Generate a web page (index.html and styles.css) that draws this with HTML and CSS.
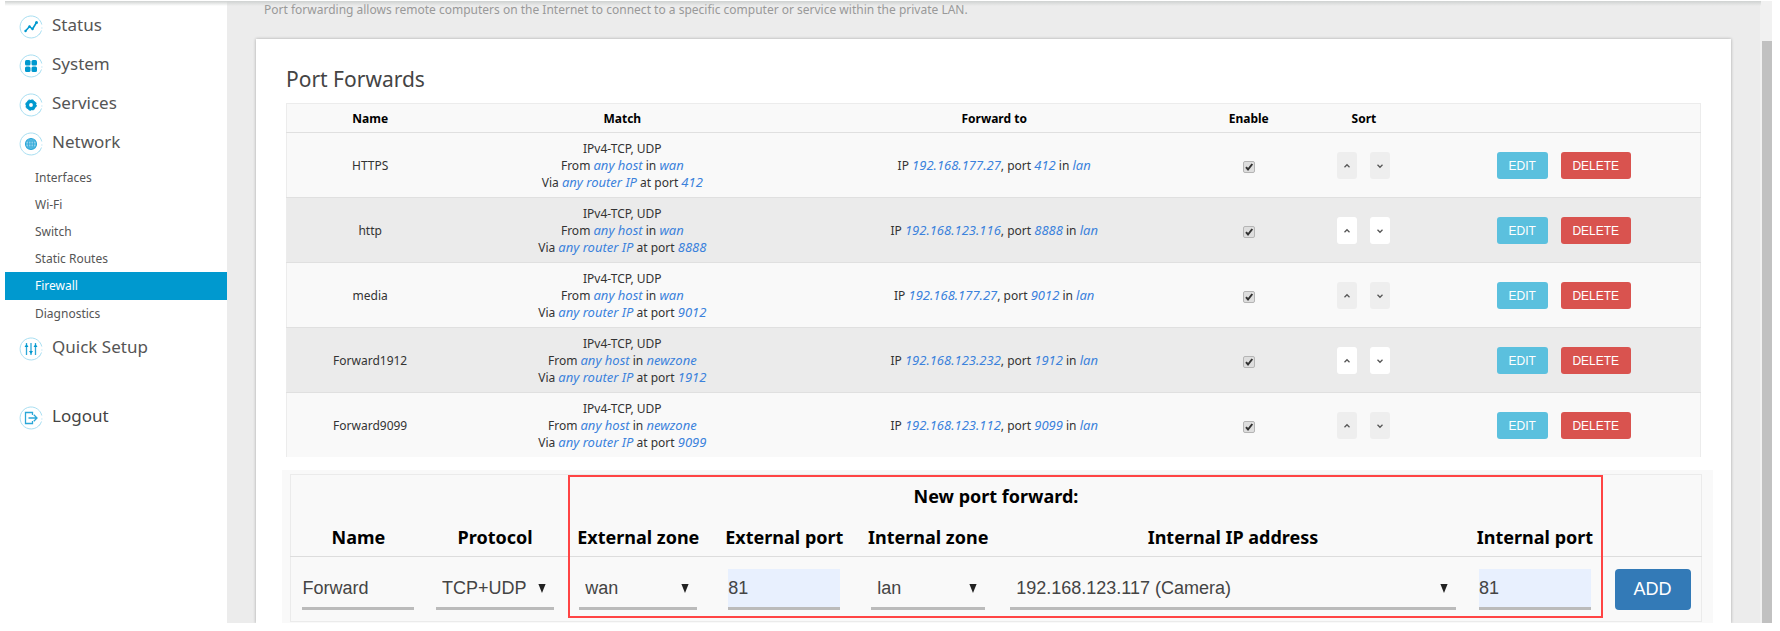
FILE: index.html
```html
<!DOCTYPE html>
<html lang="en">
<head>
  <meta charset="UTF-8">
  <title>Port Forwards</title>
  <link rel="stylesheet" href="styles.css">
</head>
<body>

<div class="page">
  <nav class="sidebar">
    <ul class="menu">
      <li>
        <a class="menu-link" href="#">
          <svg class="icon" viewBox="0 0 24 24"><path class="ring" d="M22.500 15.500A11 11 0 1 1 22.800 9.500M21 18.500l-1 1.200M22.900 12.500v1"/><path class="line" d="M6.500 16l4-4.500 3 2.500 4-6.500"/><circle class="fill" cx="6.500" cy="16" r="1.200"/><circle class="fill" cx="17.500" cy="7.500" r="1.500"/><circle class="fill" cx="10.500" cy="11.500" r="1.200"/><circle class="fill" cx="13.500" cy="14" r="1.200"/></svg>
          Status
        </a>
      </li>
      <li>
        <a class="menu-link" href="#">
          <svg class="icon" viewBox="0 0 24 24"><path class="ring" d="M22.500 15.500A11 11 0 1 1 22.800 9.500M21 18.500l-1 1.200M22.900 12.500v1"/><rect class="fill" x="6" y="6" width="5.500" height="5.500" rx="1.500"/><rect class="fill" x="12.500" y="6" width="5.500" height="5.500" rx="1.500"/><rect class="fill" x="6" y="12.500" width="5.500" height="5.500" rx="1.500"/><rect class="fill" x="12.500" y="12.500" width="5.500" height="5.500" rx="1.500"/></svg>
          System
        </a>
      </li>
      <li>
        <a class="menu-link" href="#">
          <svg class="icon" viewBox="0 0 24 24"><path class="ring" d="M22.500 15.500A11 11 0 1 1 22.800 9.500M21 18.500l-1 1.200M22.900 12.500v1"/><circle cx="12" cy="12" r="3.600" fill="none" stroke="#0099cf" stroke-width="3.400"/><circle cx="12" cy="12" r="5.300" fill="none" stroke="#0099cf" stroke-width="1" stroke-dasharray="2.200 1.960"/></svg>
          Services
        </a>
      </li>
      <li>
        <a class="menu-link" href="#">
          <svg class="icon" viewBox="0 0 24 24"><path class="ring" d="M22.500 15.500A11 11 0 1 1 22.800 9.500M21 18.500l-1 1.200M22.900 12.500v1"/><circle cx="12" cy="12" r="5.500" fill="#8fd0ec" stroke="#2ba7d8" stroke-width="1.200"/><path d="M6.500 12h11M12 6.500v11M7.500 9h9M7.500 15h9" stroke="#2ba7d8" stroke-width=".8"/><ellipse cx="12" cy="12" rx="2.600" ry="5.500" fill="none" stroke="#2ba7d8" stroke-width=".8"/></svg>
          Network
        </a>
        <ul class="submenu">
          <li><a href="#">Interfaces</a></li>
          <li><a href="#">Wi-Fi</a></li>
          <li><a href="#">Switch</a></li>
          <li><a href="#">Static Routes</a></li>
          <li><a class="active" href="#">Firewall</a></li>
          <li><a href="#">Diagnostics</a></li>
        </ul>
      </li>
      <li>
        <a class="menu-link" href="#">
          <svg class="icon" viewBox="0 0 24 24"><path class="ring" d="M22.500 15.500A11 11 0 1 1 22.800 9.500M21 18.500l-1 1.200M22.900 12.500v1"/><path class="line thin" d="M7.500 6v12M12 6v12M16.500 6v12"/><path class="fill" d="M5.500 10h4L7.500 7zM10 14h4l-2 3zM14.500 10h4l-2-3z"/></svg>
          Quick Setup
        </a>
      </li>
      <li class="logout">
        <a class="menu-link" href="#">
          <svg class="icon" viewBox="0 0 24 24"><path class="ring" d="M22.500 15.500A11 11 0 1 1 22.800 9.500M21 18.500l-1 1.200M22.900 12.500v1"/><path class="line thin" d="M13.500 9V6.500H6.500v11h7V15M9.500 12h8.500M14.800 8.800L18 12l-3.200 3.200"/></svg>
          Logout
        </a>
      </li>
    </ul>
  </nav>

  <main class="main">
    <p class="description">Port forwarding allows remote computers on the Internet to connect to a specific computer or service within the private LAN.</p>

    <div class="card">
      <h2>Port Forwards</h2>

      <table class="rules">
        <colgroup>
          <col class="c-name"><col class="c-match"><col class="c-forward"><col class="c-enable"><col class="c-sort"><col>
        </colgroup>
        <thead>
          <tr>
            <th>Name</th>
            <th>Match</th>
            <th>Forward to</th>
            <th>Enable</th>
            <th>Sort</th>
            <th></th>
          </tr>
        </thead>
        <tbody>
          <tr>
            <td>HTTPS</td>
            <td>IPv4-TCP, UDP<br>From <var>any host</var> in <var>wan</var><br>Via <var>any router IP</var> at port <var>412</var></td>
            <td>IP <var>192.168.177.27</var>, port <var>412</var> in <var>lan</var></td>
            <td><input type="checkbox" aria-label="Enable HTTPS" checked></td>
            <td><div class="buttons"><button class="btn-sort" aria-label="Move up"><svg viewBox="0 0 8 8"><path d="M2 5l2-2 2 2"/></svg></button><button class="btn-sort" aria-label="Move down"><svg viewBox="0 0 8 8"><path d="M2 3l2 2 2-2"/></svg></button></div></td>
            <td><div class="buttons"><button class="btn btn-edit">EDIT</button><button class="btn btn-delete">DELETE</button></div></td>
          </tr>
          <tr>
            <td>http</td>
            <td>IPv4-TCP, UDP<br>From <var>any host</var> in <var>wan</var><br>Via <var>any router IP</var> at port <var>8888</var></td>
            <td>IP <var>192.168.123.116</var>, port <var>8888</var> in <var>lan</var></td>
            <td><input type="checkbox" aria-label="Enable http" checked></td>
            <td><div class="buttons"><button class="btn-sort" aria-label="Move up"><svg viewBox="0 0 8 8"><path d="M2 5l2-2 2 2"/></svg></button><button class="btn-sort" aria-label="Move down"><svg viewBox="0 0 8 8"><path d="M2 3l2 2 2-2"/></svg></button></div></td>
            <td><div class="buttons"><button class="btn btn-edit">EDIT</button><button class="btn btn-delete">DELETE</button></div></td>
          </tr>
          <tr>
            <td>media</td>
            <td>IPv4-TCP, UDP<br>From <var>any host</var> in <var>wan</var><br>Via <var>any router IP</var> at port <var>9012</var></td>
            <td>IP <var>192.168.177.27</var>, port <var>9012</var> in <var>lan</var></td>
            <td><input type="checkbox" aria-label="Enable media" checked></td>
            <td><div class="buttons"><button class="btn-sort" aria-label="Move up"><svg viewBox="0 0 8 8"><path d="M2 5l2-2 2 2"/></svg></button><button class="btn-sort" aria-label="Move down"><svg viewBox="0 0 8 8"><path d="M2 3l2 2 2-2"/></svg></button></div></td>
            <td><div class="buttons"><button class="btn btn-edit">EDIT</button><button class="btn btn-delete">DELETE</button></div></td>
          </tr>
          <tr>
            <td>Forward1912</td>
            <td>IPv4-TCP, UDP<br>From <var>any host</var> in <var>newzone</var><br>Via <var>any router IP</var> at port <var>1912</var></td>
            <td>IP <var>192.168.123.232</var>, port <var>1912</var> in <var>lan</var></td>
            <td><input type="checkbox" aria-label="Enable Forward1912" checked></td>
            <td><div class="buttons"><button class="btn-sort" aria-label="Move up"><svg viewBox="0 0 8 8"><path d="M2 5l2-2 2 2"/></svg></button><button class="btn-sort" aria-label="Move down"><svg viewBox="0 0 8 8"><path d="M2 3l2 2 2-2"/></svg></button></div></td>
            <td><div class="buttons"><button class="btn btn-edit">EDIT</button><button class="btn btn-delete">DELETE</button></div></td>
          </tr>
          <tr>
            <td>Forward9099</td>
            <td>IPv4-TCP, UDP<br>From <var>any host</var> in <var>newzone</var><br>Via <var>any router IP</var> at port <var>9099</var></td>
            <td>IP <var>192.168.123.112</var>, port <var>9099</var> in <var>lan</var></td>
            <td><input type="checkbox" aria-label="Enable Forward9099" checked></td>
            <td><div class="buttons"><button class="btn-sort" aria-label="Move up"><svg viewBox="0 0 8 8"><path d="M2 5l2-2 2 2"/></svg></button><button class="btn-sort" aria-label="Move down"><svg viewBox="0 0 8 8"><path d="M2 3l2 2 2-2"/></svg></button></div></td>
            <td><div class="buttons"><button class="btn btn-edit">EDIT</button><button class="btn btn-delete">DELETE</button></div></td>
          </tr>
        </tbody>
      </table>

      <form class="new-rule">
        <table>
          <colgroup>
            <col class="n-name"><col class="n-proto"><col class="n-zone"><col class="n-port"><col class="n-port"><col class="n-ip"><col class="n-proto"><col>
          </colgroup>
          <thead>
            <tr>
              <th colspan="8">New port forward:</th>
            </tr>
            <tr>
              <th><label for="name">Name</label></th>
              <th><label for="proto">Protocol</label></th>
              <th><label for="extZone">External zone</label></th>
              <th><label for="extPort">External port</label></th>
              <th><label for="intZone">Internal zone</label></th>
              <th><label for="intIp">Internal IP address</label></th>
              <th><label for="intPort">Internal port</label></th>
              <th></th>
            </tr>
          </thead>
          <tbody>
            <tr>
              <td><input type="text" id="name" value="Forward"></td>
              <td><select id="proto"><option>TCP+UDP</option><option>TCP</option><option>UDP</option></select></td>
              <td><select id="extZone"><option>wan</option><option>newzone</option></select></td>
              <td><input class="filled" type="text" id="extPort" value="81"></td>
              <td><select id="intZone"><option>lan</option></select></td>
              <td><select id="intIp"><option>192.168.123.117 (Camera)</option></select></td>
              <td><input class="filled" type="text" id="intPort" value="81"></td>
              <td><button class="btn-add" type="button">ADD</button></td>
            </tr>
          </tbody>
        </table>
        <div class="highlight"></div>
      </form>
    </div>
  </main>

  <div class="scrollbar"><div class="thumb"></div></div>
</div>

</body>
</html>
```
FILE: styles.css
```css
* {
  box-sizing: border-box;
}

body {
  margin: 1px 8px 8px 5px;
  background: #fff;
  font-family: "Noto Sans", "Open Sans", sans-serif;
  font-size: 12px;
  line-height: 17px;
  color: #333;
}

.page {
  position: relative;
  display: flex;
}

/* shadow thrown by the fixed header */
.page::before {
  content: "";
  position: absolute;
  top: 0;
  left: 0;
  right: 11px;
  height: 5px;
  background: linear-gradient(#cfd2d1, rgba(220, 220, 220, 0));
}

/* sidebar */
.sidebar {
  width: 222px;
  flex-shrink: 0;
  padding-top: 4px;
}

.menu,
.submenu {
  list-style: none;
  margin: 0;
  padding: 0;
}

.menu-link {
  display: flex;
  align-items: center;
  gap: 9px;
  height: 39px;
  padding-left: 14px;
  font-size: 17px;
  color: #555;
  text-decoration: none;
}

.icon {
  width: 24px;
  height: 24px;
  margin-top: 4px;
}

.ring {
  fill: none;
  stroke: #a9dff2;
  stroke-width: 1;
}

.line {
  fill: none;
  stroke: #0099cf;
  stroke-width: 1.6;
}

.thin {
  stroke: #2ba7d8;
  stroke-width: 1.3;
}

.fill {
  fill: #0099cf;
}

.submenu {
  padding-top: 3px;
}

.submenu a {
  display: block;
  height: 27px;
  padding-left: 30px;
  line-height: 27px;
  color: #555;
  text-decoration: none;
}

.submenu .active {
  height: 28px;
  background: #0099cf;
  color: #fff;
}

.logout {
  margin-top: 30px;
}

.logout .menu-link {
  color: #444;
}

/* content */
.main {
  flex: 1;
  padding: 0 29px 0 29px;
  background: #ececec;
}

.description {
  margin: 0 0 21px;
  padding-left: 8px;
  color: #999;
}

.card {
  padding: 28px 30px 0;
  background: #fff;
  box-shadow: 0 0 3px rgba(0, 0, 0, 0.3);
}

.card h2 {
  margin: 0 0 12px;
  font-size: 21px;
  line-height: 24px;
  font-weight: normal;
  color: #444;
}

table {
  width: 100%;
  border-collapse: collapse;
  table-layout: fixed;
}

.rules {
  border: 1px solid #ececec;
  border-bottom: 0;
  background: #f9f9f9;
  text-align: center;
}

.c-name { width: 11.8%; }
.c-match { width: 23.9%; }
.c-forward { width: 28.7%; }
.c-enable { width: 7.3%; }
.c-sort { width: 9%; }

.rules th {
  padding: 6px 0 5px;
  color: #000;
}

.rules td {
  padding: 7px 0 6px;
  border-top: 1px solid #e0e0e0;
}

.rules tbody tr:nth-child(even) {
  background: #ebebeb;
}

.rules var {
  font-size: 13px;
  line-height: 1;
  color: #3b82dc;
}

.rules input[type="checkbox"] {
  appearance: none;
  width: 12px;
  height: 12px;
  margin: 0;
  border: 1px solid #b5b5b5;
  border-radius: 2px;
  background: #dedede;
  vertical-align: middle;
}

.rules input[type="checkbox"]:checked {
  background: #dedede url("data:image/svg+xml,%3Csvg xmlns='http://www.w3.org/2000/svg' viewBox='0 0 10 10'%3E%3Cpath d='M2 5.200l2 2.300L8.300 2' fill='none' stroke='%23333' stroke-width='2'/%3E%3C/svg%3E") center / 10px no-repeat;
}

.buttons {
  display: flex;
  justify-content: center;
  gap: 13px;
}

.btn,
.btn-sort {
  height: 27px;
  padding: 0;
  border: 0;
  border-radius: 3px;
  font: 12px "Liberation Sans", Arial, sans-serif;
  color: #fff;
  cursor: pointer;
}

.btn-edit {
  width: 51px;
  background: #5bc0de;
}

.btn-delete {
  width: 70px;
  background: #d9534f;
}

.btn-sort {
  width: 20px;
  background: #eee;
}

.rules tr:nth-child(even) .btn-sort {
  background: #fff;
}

.btn-sort svg {
  display: block;
  width: 10px;
  height: 10px;
  margin: 0 auto;
  fill: none;
  stroke: #555;
  stroke-width: 1;
}

/* new rule form */
.new-rule {
  position: relative;
  margin: 13px -12px 0 -4px;
  padding: 4px 11px 1px 8px;
  background: #f9f9f9;
}

.new-rule table {
  border: 1px solid #ebebeb;
}

.n-name { width: 9.6%; }
.n-proto { width: 9.8%; }
.n-zone { width: 10.5%; }
.n-port { width: 10.2%; }
.n-ip { width: 33%; }

.new-rule th {
  height: 41px;
  padding: 2px 0 0;
  font-size: 18px;
  line-height: 24px;
  color: #000;
  white-space: nowrap;
}

.new-rule td {
  padding: 12px 10px 11px;
  border-top: 1px solid #ddd;
}

.new-rule input,
.new-rule select {
  display: block;
  width: 100%;
  height: 41px;
  margin: 0 auto;
  padding: 0;
  border: 0;
  border-bottom: 3px solid #bbb;
  border-radius: 0;
  background: transparent;
  font: 18px "Liberation Sans", Arial, sans-serif;
  color: #444;
}

.new-rule input {
  max-width: 112px;
}

.new-rule select {
  appearance: none;
  padding-left: 6px;
  background: url("data:image/svg+xml,%3Csvg xmlns='http://www.w3.org/2000/svg' viewBox='0 0 8 10'%3E%3Cpath d='M0 0h8L4 10z' fill='%23222'/%3E%3C/svg%3E") right 8px top 15px / 8px 9px no-repeat;
}

.new-rule .filled {
  background: #e8f0fe;
}

.new-rule td:nth-child(3),
.new-rule td:nth-child(5) {
  padding-left: 15px;
  padding-right: 15px;
}

.btn-add {
  display: block;
  width: 76px;
  height: 41px;
  margin: 0 auto;
  padding: 0;
  border: 0;
  border-radius: 4px;
  background: #337ab7;
  font: 18px "Liberation Sans", Arial, sans-serif;
  color: #fff;
  cursor: pointer;
}

/* red frame round the fields to fill in */
.highlight {
  position: absolute;
  top: 5px;
  bottom: 5px;
  left: 20%;
  right: 110px;
  border: 2px solid #f44;
  pointer-events: none;
}

/* window scrollbar */
.scrollbar {
  width: 12px;
  flex-shrink: 0;
  padding: 40px 0 0 2px;
  background: #f1f1f1;
}

.thumb {
  height: 100%;
  background: #c1c1c1;
}
```
